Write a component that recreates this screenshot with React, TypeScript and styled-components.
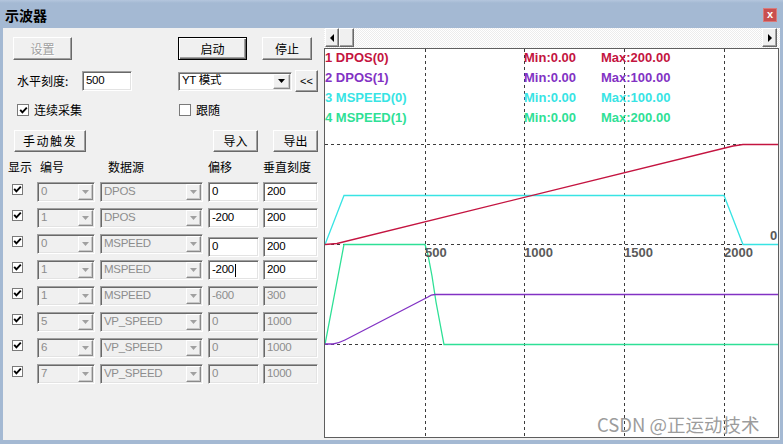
import React from "react";
import styled, { createGlobalStyle, css } from "styled-components";

interface channelRowType {
  num: string;
  source: string;
  offset: string;
  scale: string;
  editable?: boolean;
  shift?: number;
  caret?: boolean;
}

interface legendType {
  label: string;
  min: string;
  max: string;
  color: string;
}

const CJK = `"Noto Sans CJK SC", "Noto Sans", sans-serif`;
const LATIN = `"Liberation Sans", "Noto Sans CJK SC", sans-serif`;

const FRAME = "#a4b9d3";
const FACE = "#f0f0f0";

const CRIMSON = "#c41440";
const PURPLE = "#8232c4";
const CYAN = "#38e4e4";
const GREEN = "#2ee096";

const rows: channelRowType[] = [
  { num: "0", source: "DPOS", offset: "0", scale: "200", editable: true },
  { num: "1", source: "DPOS", offset: "-200", scale: "200", editable: true },
  { num: "0", source: "MSPEED", offset: "0", scale: "200", editable: true, shift: 3 },
  { num: "1", source: "MSPEED", offset: "-200", scale: "200", editable: true, caret: true },
  { num: "1", source: "MSPEED", offset: "-600", scale: "300" },
  { num: "5", source: "VP_SPEED", offset: "0", scale: "1000" },
  { num: "6", source: "VP_SPEED", offset: "0", scale: "1000" },
  { num: "7", source: "VP_SPEED", offset: "0", scale: "1000" },
];

const legends: legendType[] = [
  { label: "1 DPOS(0)", min: "Min:0.00", max: "Max:200.00", color: CRIMSON },
  { label: "2 DPOS(1)", min: "Min:0.00", max: "Max:100.00", color: PURPLE },
  { label: "3 MSPEED(0)", min: "Min:0.00", max: "Max:100.00", color: CYAN },
  { label: "4 MSPEED(1)", min: "Min:0.00", max: "Max:200.00", color: GREEN },
];

// 차트 좌표 = 페이지 좌표 (viewBox 로 맞춤)
const gridX = [425.5, 524.5, 624.5, 724.5];
const gridY = [144.5, 244.5, 344.5];
const axisLabels = [
  { x: 425, text: "500" },
  { x: 524, text: "1000" },
  { x: 624, text: "1500" },
  { x: 724, text: "2000" },
];

const GlobalStyle = createGlobalStyle`
  html, body {
    margin: 0;
    padding: 0;
    background: ${FRAME};
  }
  body {
    width: 783px;
    height: 444px;
    overflow: hidden;
    font-family: ${CJK};
  }
`;

const DropArrow = ({ disabled }: { disabled?: boolean }) => (
  <svg width="7" height="4" viewBox="0 0 7 4">
    <path d="M0 0 H7 L3.5 4 Z" fill={disabled ? "#a0a0a0" : "#000"} />
  </svg>
);

const CheckMark = () => (
  <svg width="9" height="9" viewBox="0 0 9 9">
    <path d="M1.2 3.8 L3.4 6.3 L7.8 1.6" fill="none" stroke="#000" strokeWidth="1.9" />
  </svg>
);

const ScrollArrow = ({ dir }: { dir: "left" | "right" }) => (
  <svg width="4" height="8" viewBox="0 0 4 8">
    <path d={dir === "left" ? "M4 0 V8 L0 4 Z" : "M0 0 V8 L4 4 Z"} fill="#000" />
  </svg>
);

const Scope = () => (
  <ChartSvg width="454" height="389" viewBox="325 49 454 389">
    <rect x="325" y="49" width="454" height="389" fill="#fff" />
    {gridX.map((x) => (
      <line key={x} x1={x} y1="49" x2={x} y2="438" stroke="#3c3c3c" strokeDasharray="3 3" />
    ))}
    {gridY.map((y) => (
      <line key={y} x1="325" y1={y} x2="779" y2={y} stroke="#3c3c3c" strokeDasharray="3 3" />
    ))}

    <polyline
      points="325,244.5 344,195.5 724,195.5 743,244.5 779,244.5"
      fill="none"
      stroke={CYAN}
      strokeWidth="1.3"
    />
    <polyline
      points="325,344.5 344,244.5 425,244.5 428,255 432,276 436,302 444,344.5 779,344.5"
      fill="none"
      stroke={GREEN}
      strokeWidth="1.3"
    />
    <path
      d="M325 344 L333 344 Q339 343 345 340 L428 297 Q431 294.5 435 294.5 L779 294.5"
      fill="none"
      stroke={PURPLE}
      strokeWidth="1.3"
    />
    <polyline
      points="325,244.5 337,243.5 733,146 743,144.5 779,144.5"
      fill="none"
      stroke={CRIMSON}
      strokeWidth="1.3"
    />

    {legends.map((item, i) => (
      <g key={item.label} fill={item.color} fontFamily={LATIN} fontSize="13" fontWeight="700">
        <text x="325" y={62 + i * 20}>{item.label}</text>
        <text x="524" y={62 + i * 20}>{item.min}</text>
        <text x="601" y={62 + i * 20}>{item.max}</text>
      </g>
    ))}

    <g fill="#5a5a5a" fontFamily={LATIN} fontSize="13" fontWeight="700">
      {axisLabels.map((a) => (
        <text key={a.text} x={a.x} y="257">{a.text}</text>
      ))}
      <text x="770" y="240">0</text>
    </g>

    <text x="597" y="432" fill="#9c9c9c" fontFamily={CJK} fontSize="18.5">
      CSDN @正运动技术
    </text>
  </ChartSvg>
);

const App = () => {
  return (
    <>
      <GlobalStyle />
      <Window>
        <TitleBar>
          <Title>示波器</Title>
          <CloseBtn>x</CloseBtn>
        </TitleBar>
        <Body>
          <LeftPanel>
            <ToolRow $top={9} $pad={10} $h={23}>
              <Button $w={59} disabled>设置</Button>
              <Button $w={69} $gap={106} $primary>启动</Button>
              <Button $w={50} $gap={15}>停止</Button>
            </ToolRow>

            <ToolRow $top={10} $pad={14} $h={22}>
              <FieldLabel>水平刻度:</FieldLabel>
              <Field $w={50}>500</Field>
              <Combo $w={114} $gap={46} $h={19}>
                <ComboText>YT 模式</ComboText>
                <ComboBtn $w={17}>
                  <DropArrow />
                </ComboBtn>
              </Combo>
              <Button $w={23} $h={22} $gap={3} $latin>
                &lt;&lt;
              </Button>
            </ToolRow>

            <ToolRow $top={10} $pad={14} $h={16}>
              <CheckLabel $w={162}>
                <CheckBox>
                  <CheckMark />
                </CheckBox>
                连续采集
              </CheckLabel>
              <CheckLabel>
                <CheckBox />
                跟随
              </CheckLabel>
            </ToolRow>

            <ToolRow $top={12} $pad={11} $h={22}>
              <Button $w={72} $h={22} $wide>手动触发</Button>
              <Button $w={45} $h={22} $gap={127}>导入</Button>
              <Button $w={45} $h={22} $gap={15}>导出</Button>
            </ToolRow>

            <HeaderRow>
              <span>显示</span>
              <span>编号</span>
              <span>数据源</span>
              <span>偏移</span>
              <span>垂直刻度</span>
            </HeaderRow>

            <ChannelList>
              {rows.map((row, idx) => (
                <ChannelRow key={idx}>
                  <SmallCheck>
                    <CheckMark />
                  </SmallCheck>
                  <Combo $w={58} $gap={14} $disabled>
                    <ComboText>{row.num}</ComboText>
                    <ComboBtn $w={15}>
                      <DropArrow disabled />
                    </ComboBtn>
                  </Combo>
                  <Combo $w={103} $gap={5} $disabled>
                    <ComboText>{row.source}</ComboText>
                    <ComboBtn $w={15}>
                      <DropArrow disabled />
                    </ComboBtn>
                  </Combo>
                  <Field $w={51} $gap={5} $shift={row.shift} $disabled={!row.editable}>
                    {row.offset}
                    {row.caret && <Caret />}
                  </Field>
                  <Field $w={55} $gap={4} $shift={row.shift} $disabled={!row.editable}>
                    {row.scale}
                  </Field>
                </ChannelRow>
              ))}
            </ChannelList>
          </LeftPanel>

          <RightPanel>
            <ScrollBar>
              <ScrollBtn $w={14}>
                <ScrollArrow dir="left" />
              </ScrollBtn>
              <ScrollThumb />
              <ScrollTrack />
              <ScrollBtn $w={15}>
                <ScrollArrow dir="right" />
              </ScrollBtn>
            </ScrollBar>
            <ChartBox>
              <Scope />
            </ChartBox>
          </RightPanel>
        </Body>
      </Window>
    </>
  );
};

export default App;

const Window = styled.div`
  width: 783px;
  height: 444px;
  display: flex;
  flex-direction: column;
  background: ${FRAME};
  box-sizing: border-box;
`;

const TitleBar = styled.div`
  height: 28px;
  flex: none;
  display: flex;
  align-items: center;
  justify-content: space-between;
  padding: 0 6px 0 5px;
  background: linear-gradient(#b4c6dd, ${FRAME} 3px);
`;

const Title = styled.div`
  font-family: ${CJK};
  font-size: 14px;
  font-weight: 700;
  line-height: 1;
  color: #000;
  margin-top: 1px;
`;

const CloseBtn = styled.div`
  width: 14px;
  height: 14px;
  box-sizing: border-box;
  background: #c94f4f;
  border: 1px solid #d87a7a;
  color: #fff;
  font-family: ${LATIN};
  font-size: 11px;
  font-weight: 700;
  line-height: 11px;
  text-align: center;
  margin-top: 1px;
`;

const Body = styled.div`
  flex: 1;
  display: flex;
  margin: 0 3px 4px 3px;
  background: ${FACE};
  min-height: 0;
`;

const LeftPanel = styled.div`
  width: 321px;
  flex: none;
  display: flex;
  flex-direction: column;
`;

const ToolRow = styled.div<{ $top: number; $pad: number; $h: number }>`
  display: flex;
  align-items: center;
  height: ${(p) => p.$h}px;
  flex: none;
  margin-top: ${(p) => p.$top}px;
  padding-left: ${(p) => p.$pad}px;
`;

const Button = styled.button<{
  $w: number;
  $h?: number;
  $gap?: number;
  $primary?: boolean;
  $latin?: boolean;
  $wide?: boolean;
}>`
  width: ${(p) => p.$w}px;
  height: ${(p) => p.$h ?? 23}px;
  margin: 0 0 0 ${(p) => p.$gap ?? 0}px;
  padding: 0;
  box-sizing: border-box;
  font-family: ${(p) => (p.$latin ? LATIN : CJK)};
  font-size: ${(p) => (p.$latin ? 11 : 12)}px;
  letter-spacing: ${(p) => (p.$wide ? "1.5px" : "0")};
  line-height: 1;
  color: #000;
  background: ${FACE};
  border: 1px solid;
  border-color: #fff #696969 #696969 #fff;
  box-shadow: inset -1px -1px #a0a0a0;
  display: flex;
  align-items: center;
  justify-content: center;

  ${(p) =>
    p.$primary &&
    css`
      border-color: #000;
      box-shadow: inset 1px 1px #fff, inset -1px -1px #696969,
        inset -2px -2px #a0a0a0;
    `}

  &:disabled {
    color: #a0a0a0;
    text-shadow: 1px 1px #fff;
  }
`;

const FieldLabel = styled.span`
  width: 65px;
  font-family: ${CJK};
  font-size: 12px;
  line-height: 1;
  color: #000;
`;

const Field = styled.div<{
  $w: number;
  $gap?: number;
  $shift?: number;
  $disabled?: boolean;
}>`
  width: ${(p) => p.$w}px;
  height: 20px;
  flex: none;
  margin-left: ${(p) => p.$gap ?? 0}px;
  margin-top: ${(p) => p.$shift ?? 0}px;
  box-sizing: border-box;
  display: flex;
  align-items: center;
  padding-left: 3px;
  border: 1px solid;
  border-color: #a0a0a0 #fff #fff #a0a0a0;
  box-shadow: inset 1px 1px #696969, inset -1px -1px #e3e3e3;
  background: ${(p) => (p.$disabled ? FACE : "#fff")};
  color: ${(p) => (p.$disabled ? "#8d8d8d" : "#000")};
  font-family: ${LATIN};
  font-size: 11.5px;
  letter-spacing: -0.3px;
  line-height: 1;
`;

const Caret = styled.span`
  width: 1px;
  height: 13px;
  background: #000;
  margin-left: 1px;
`;

const Combo = styled.div<{ $w: number; $gap?: number; $h?: number; $disabled?: boolean }>`
  width: ${(p) => p.$w}px;
  height: ${(p) => p.$h ?? 20}px;
  flex: none;
  margin-left: ${(p) => p.$gap ?? 0}px;
  box-sizing: border-box;
  display: flex;
  align-items: center;
  justify-content: space-between;
  padding: 1px 1px 1px 3px;
  border: 1px solid;
  border-color: #a0a0a0 #fff #fff #a0a0a0;
  box-shadow: inset 1px 1px #696969, inset -1px -1px #e3e3e3;
  background: ${(p) => (p.$disabled ? FACE : "#fff")};
  color: ${(p) => (p.$disabled ? "#8d8d8d" : "#000")};
  font-family: ${LATIN};
  font-size: 11.5px;
  letter-spacing: -0.3px;
  line-height: 1;
`;

const ComboText = styled.span`
  white-space: nowrap;
`;

const ComboBtn = styled.span<{ $w: number }>`
  width: ${(p) => p.$w}px;
  height: 100%;
  box-sizing: border-box;
  display: flex;
  align-items: center;
  justify-content: center;
  background: ${FACE};
  border: 1px solid;
  border-color: #fff #8a8a8a #8a8a8a #fff;
  box-shadow: inset -1px -1px #c8c8c8;
`;

const CheckLabel = styled.label<{ $w?: number }>`
  width: ${(p) => (p.$w ? `${p.$w}px` : "auto")};
  display: flex;
  align-items: center;
  gap: 5px;
  font-family: ${CJK};
  font-size: 12px;
  line-height: 1;
  color: #000;
`;

const CheckBox = styled.span`
  width: 12px;
  height: 12px;
  box-sizing: border-box;
  display: flex;
  align-items: center;
  justify-content: center;
  background: #fff;
  border: 1px solid #7a7a7a;
`;

const SmallCheck = styled(CheckBox)`
  width: 11px;
  height: 11px;
  margin: 2px 0 0 0;
  flex: none;
`;

const HeaderRow = styled.div`
  display: grid;
  grid-template-columns: 32px 68px 100px 55px auto;
  padding-left: 5px;
  margin-top: 7px;
  height: 16px;
  flex: none;
  align-items: center;
  font-family: ${CJK};
  font-size: 12px;
  line-height: 1;
  color: #000;
`;

const ChannelList = styled.div`
  display: flex;
  flex-direction: column;
  gap: 6px;
  margin-top: 7px;
`;

const ChannelRow = styled.div`
  display: flex;
  align-items: flex-start;
  height: 20px;
  flex: none;
  padding-left: 9px;
`;

const RightPanel = styled.div`
  flex: 1;
  display: flex;
  flex-direction: column;
  min-width: 0;
`;

const ScrollBar = styled.div`
  height: 20px;
  flex: none;
  display: flex;
  align-items: flex-start;
  padding: 0 3px 0 1px;
  background: repeating-conic-gradient(#ffffff 0 25%, #ececec 0 50%) 0 0 / 2px
    2px;
`;

const ScrollBtn = styled.div<{ $w: number }>`
  width: ${(p) => p.$w}px;
  height: 19px;
  flex: none;
  box-sizing: border-box;
  display: flex;
  align-items: center;
  justify-content: center;
  background: ${FACE};
  border: 1px solid;
  border-color: #fff #696969 #696969 #fff;
  box-shadow: inset -1px -1px #a0a0a0;
`;

const ScrollThumb = styled(ScrollBtn).attrs({ $w: 15 })``;

const ScrollTrack = styled.div`
  flex: 1;
`;

const ChartBox = styled.div`
  flex: 1;
  margin: 0 1px 2px 0;
  border: 1px solid #5e5e5e;
  background: #fff;
  overflow: hidden;
  min-height: 0;
`;

const ChartSvg = styled.svg`
  display: block;
  shape-rendering: geometricPrecision;
`;
